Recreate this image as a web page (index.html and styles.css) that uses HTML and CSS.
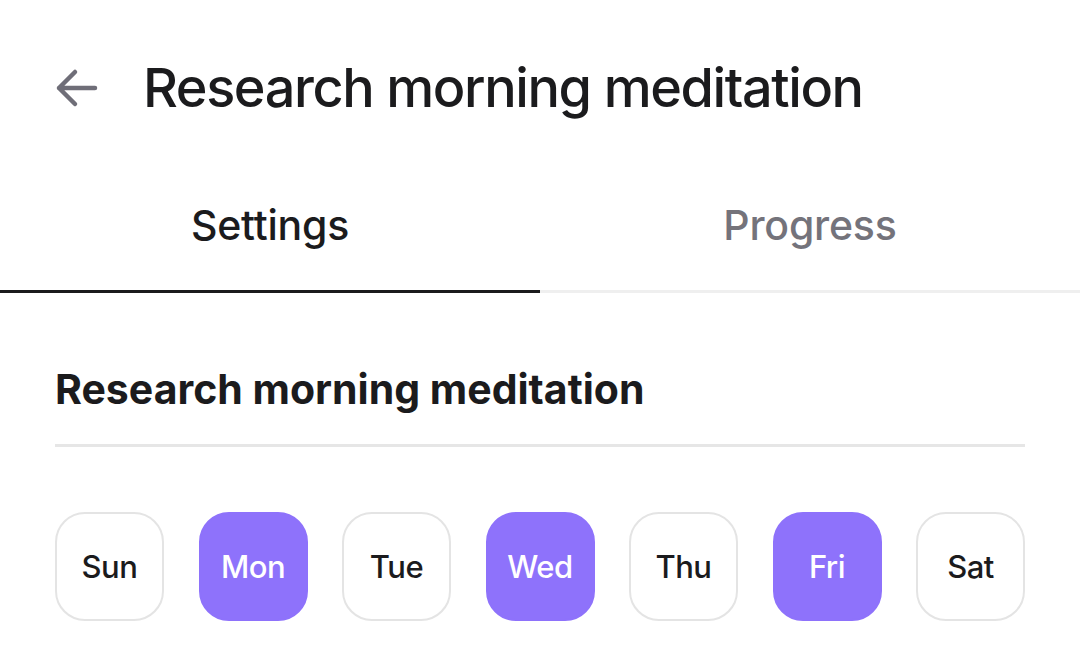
FILE: index.html
```html
<!DOCTYPE html>
<html>
<head>
<meta charset="utf-8">
<link rel="stylesheet" href="styles.css">
</head>
<body>
<header class="topbar">
  <svg class="back" width="48" height="48" viewBox="0 0 48 48" fill="none" stroke="#6f6e78" stroke-width="4.5" stroke-linecap="round" stroke-linejoin="round">
    <path d="M42 24H6M22 8L6 24l16 16"/>
  </svg>
  <h1 class="title">Research morning meditation</h1>
</header>
<nav class="tabs">
  <div class="tab active">Settings</div>
  <div class="tab">Progress</div>
</nav>
<main class="content">
  <h2 class="heading">Research morning meditation</h2>
  <div class="divider"></div>
  <div class="days">
    <div class="day">Sun</div>
    <div class="day on">Mon</div>
    <div class="day">Tue</div>
    <div class="day on">Wed</div>
    <div class="day">Thu</div>
    <div class="day on">Fri</div>
    <div class="day">Sat</div>
  </div>
</main>
</body>
</html>
```
FILE: styles.css
```css
* { box-sizing: border-box; }
html, body { margin: 0; padding: 0; background: #fff; }
body {
  font-family: Inter, "Noto Sans", sans-serif;
  color: #1b1b1d;
  width: 1080px;
  height: 658px;
  overflow: hidden;
}
.topbar {
  display: flex;
  align-items: center;
  height: 176px;
  padding-left: 53px;
  padding-bottom: 0;
}
.back { flex: none; }
.title {
  margin: 0 0 0 42px;
  font-size: 54px;
  font-weight: 500;
  letter-spacing: -1.4px;
  line-height: 1;
}
.tabs {
  display: flex;
  height: 117px;
  border-bottom: 3px solid #efefef;
}
.tab {
  flex: 1;
  display: flex;
  justify-content: center;
  padding-top: 24px;
  font-size: 41px;
  font-weight: 500;
  letter-spacing: -0.2px;
  color: #74737b;
  margin-bottom: -3px;
}
.tab.active {
  color: #1b1b1d;
  border-bottom: 3px solid #1b1b1d;
}
.content { padding: 0 55px; }
.heading {
  margin: 0;
  padding-top: 72px;
  font-size: 41px;
  font-weight: 700;
  letter-spacing: 0;
  line-height: 48px;
}
.divider {
  height: 3px;
  background: #e6e6e6;
  margin-top: 31px;
}
.days {
  display: flex;
  justify-content: space-between;
  margin-top: 65px;
}
.day {
  width: 109px;
  height: 109px;
  border: 2px solid #e4e4e4;
  border-radius: 30px;
  display: flex;
  align-items: center;
  justify-content: center;
  font-size: 31px;
  font-weight: 500;
  letter-spacing: -0.5px;
  color: #1b1b1d;
}
.day.on {
  background: #8e72fb;
  border-color: #8e72fb;
  color: #fff;
}
```
